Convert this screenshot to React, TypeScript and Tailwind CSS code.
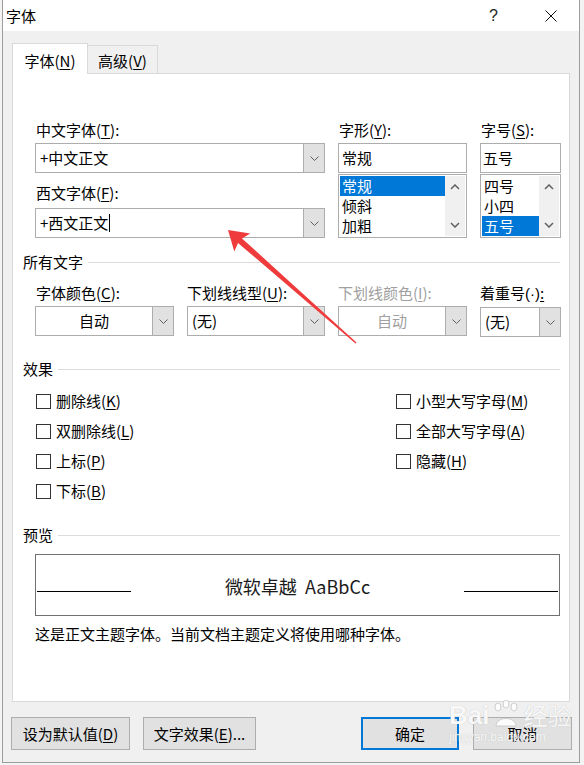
import type { ReactNode } from "react";

const STYLE_ITEMS = ["常规", "倾斜", "加粗"];
const SIZE_ITEMS = ["四号", "小四", "五号"];

function Key({ children }: { children: ReactNode }) {
  return <span className="underline decoration-1 underline-offset-[2px]">{children}</span>;
}

function Caret() {
  return (
    <svg width="9" height="5" viewBox="0 0 9 5" className="block">
      <path d="M0.5 0.5 L4.5 4.5 L8.5 0.5" fill="none" stroke="#606060" strokeWidth="1" />
    </svg>
  );
}

function ScrollArrow({ up }: { up?: boolean }) {
  return (
    <svg width="10" height="6" viewBox="0 0 10 6" className="block">
      <path
        d={up ? "M1 5 L5 1 L9 5" : "M1 1 L5 5 L9 1"}
        fill="none"
        stroke="#606060"
        strokeWidth="1.5"
      />
    </svg>
  );
}

function Combo({
  className,
  children,
  center,
  muted,
}: {
  className: string;
  children: ReactNode;
  center?: boolean;
  muted?: boolean;
}) {
  return (
    <div className={`mt-[3px] flex h-[30px] shrink-0 border border-[#adadad] bg-white ${className}`}>
      <div
        className={`flex flex-1 items-center px-[4px] ${center ? "justify-center" : ""} ${
          muted ? "text-[#a0a0a0]" : "text-black"
        }`}
      >
        {children}
      </div>
      <div className="flex w-[21px] items-center justify-center border-l border-[#adadad] bg-[#e1e1e1]">
        <Caret />
      </div>
    </div>
  );
}

function ListBox({ items, selected }: { items: string[]; selected: string }) {
  return (
    <div className="mt-[1px] flex h-[64px] border border-[#adadad] bg-white p-[1px]">
      <div className="flex-1">
        {items.map((item) => (
          <div
            key={item}
            className={`h-[20px] pl-[2px] leading-[20px] ${
              item === selected ? "bg-[#0078d7] text-white" : ""
            }`}
          >
            {item}
          </div>
        ))}
      </div>
      <div className="flex w-[20px] flex-col items-center justify-between bg-[#f0f0f0] py-[8px]">
        <ScrollArrow up />
        <ScrollArrow />
      </div>
    </div>
  );
}

function Section({ title }: { title: string }) {
  return (
    <div className="flex h-[20px] items-center">
      <span className="leading-[20px]">{title}</span>
      <div className="ml-[5px] h-px flex-1 bg-[#dcdcdc]" />
    </div>
  );
}

function Check({ children }: { children: ReactNode }) {
  return (
    <div className="flex h-[30px] items-center">
      <div className="ml-[1px] h-[15px] w-[15px] border border-[#333333] bg-white" />
      <span className="ml-[5px]">{children}</span>
    </div>
  );
}

function Button({
  className,
  children,
  primary,
}: {
  className: string;
  children: ReactNode;
  primary?: boolean;
}) {
  return (
    <div
      className={`flex h-[33px] items-center justify-center bg-[#e1e1e1] ${
        primary ? "border-2 border-[#0078d7]" : "border border-[#adadad]"
      } ${className}`}
    >
      {children}
    </div>
  );
}

export default function App() {
  return (
    <div className="relative h-[765px] w-[584px] overflow-hidden bg-[#f3f3f3] font-['Noto_Sans_CJK_SC','Noto_Sans',sans-serif] text-[15px] leading-[20px] text-black">
      <div className="ml-[2px] flex h-[763px] w-[578px] flex-col border-x border-b border-[#9d9d9d] bg-[#f0f0f0]">
        {/* title bar */}
        <div className="flex h-[31px] items-center bg-white">
          <span className="ml-[3px]">字体</span>
          <div className="ml-auto flex h-full w-[57px] items-center justify-center font-['Liberation_Sans',sans-serif] text-[16px] font-light text-[#222]">
            ?
          </div>
          <div className="flex h-full w-[57px] items-center justify-center">
            <svg width="12" height="12" viewBox="0 0 12 12">
              <path d="M0.5 0.5 L11.5 11.5 M11.5 0.5 L0.5 11.5" stroke="#111" strokeWidth="1" />
            </svg>
          </div>
        </div>

        {/* tabs */}
        <div className="ml-[9px] mt-[12px] flex h-[30px] items-start">
          <div className="relative z-10 flex h-[31px] w-[76px] justify-center border-x border-t border-[#d9d9d9] bg-white pt-[7px]">
            字体(<Key>N</Key>)
          </div>
          <div className="mt-[2px] flex h-[28px] w-[70px] justify-center border-r border-t border-[#d9d9d9] pt-[5px]">
            高级(<Key>V</Key>)
          </div>
        </div>

        {/* panel */}
        <div className="ml-[9px] flex h-[629px] w-[558px] flex-col border border-[#d9d9d9] bg-white pl-[10px] pr-[9px]">
          <div className="ml-[12px] mt-[46px] flex">
            <div className="w-[290px] shrink-0">
              <div className="pl-[1px]">
                中文字体(<Key>T</Key>):
              </div>
              <Combo className="w-[290px]">+中文正文</Combo>
              <div className="mt-[10px] pl-[1px]">
                西文字体(<Key>F</Key>):
              </div>
              <Combo className="mt-[5px] w-[290px]">
                +西文正文
                <span className="ml-[1px] inline-block h-[18px] w-px bg-black" />
              </Combo>
            </div>
            <div className="ml-[13px] w-[129px] shrink-0">
              <div className="pl-[1px]">
                字形(<Key>Y</Key>):
              </div>
              <div className="mt-[3px] flex h-[30px] items-center border border-[#adadad] px-[3px]">常规</div>
              <ListBox items={STYLE_ITEMS} selected="常规" />
            </div>
            <div className="ml-[13px] w-[81px] shrink-0">
              <div className="pl-[1px]">
                字号(<Key>S</Key>):
              </div>
              <div className="mt-[3px] flex h-[30px] items-center border border-[#adadad] px-[2px]">五号</div>
              <ListBox items={SIZE_ITEMS} selected="五号" />
            </div>
          </div>

          <div className="mt-[14px]">
            <Section title="所有文字" />
          </div>
          <div className="ml-[12px] mt-[11px] flex">
            <div className="w-[139px] shrink-0">
              <div className="pl-[1px]">
                字体颜色(<Key>C</Key>):
              </div>
              <Combo className="w-[139px]" center>
                自动
              </Combo>
            </div>
            <div className="ml-[13px] w-[138px] shrink-0">
              <div>
                下划线线型(<Key>U</Key>):
              </div>
              <Combo className="w-[138px]">(无)</Combo>
            </div>
            <div className="ml-[13px] w-[129px] shrink-0">
              <div className="text-[#a0a0a0]">
                下划线颜色(<Key>I</Key>):
              </div>
              <Combo className="w-[129px]" center muted>
                自动
              </Combo>
            </div>
            <div className="ml-[13px] w-[81px] shrink-0">
              <div>
                着重号<span className="font-['Liberation_Sans',sans-serif]">(·)</span>
                <Key>:</Key>
              </div>
              <Combo className="w-[81px]">(无)</Combo>
            </div>
          </div>

          <div className="mt-[22px]">
            <Section title="效果" />
          </div>
          <div className="ml-[12px] mt-[7px] flex">
            <div className="w-[360px] shrink-0">
              <Check>
                删除线(<Key>K</Key>)
              </Check>
              <Check>
                双删除线(<Key>L</Key>)
              </Check>
              <Check>
                上标(<Key>P</Key>)
              </Check>
              <Check>
                下标(<Key>B</Key>)
              </Check>
            </div>
            <div>
              <Check>
                小型大写字母(<Key>M</Key>)
              </Check>
              <Check>
                全部大写字母(<Key>A</Key>)
              </Check>
              <Check>
                隐藏(<Key>H</Key>)
              </Check>
            </div>
          </div>

          <div className="mt-[19px]">
            <Section title="预览" />
          </div>
          <div className="ml-[12px] mt-[9px] flex h-[62px] border border-[#707070]">
            <div className="ml-[1px] mt-[36px] h-px w-[94px] bg-black" />
            <div className="mt-[20px] flex-1 whitespace-pre text-center text-[18px] leading-[22px] text-[#1a1a1a]">
              微软卓越  AaBbCc
            </div>
            <div className="mr-[1px] mt-[36px] h-px w-[94px] bg-black" />
          </div>
          <div className="ml-[12px] mt-[8px]">这是正文主题字体。当前文档主题定义将使用哪种字体。</div>
        </div>

        {/* buttons */}
        <div className="ml-[8px] mt-[15px] flex">
          <Button className="w-[119px]">
            设为默认值(<Key>D</Key>)
          </Button>
          <Button className="ml-[13px] w-[113px]">
            文字效果(<Key>E</Key>)...
          </Button>
          <Button className="ml-[105px] w-[98px]" primary>
            确定
          </Button>
          <Button className="ml-[14px] w-[99px]">取消</Button>
        </div>
      </div>

      {/* watermark */}
      <div className="pointer-events-none absolute left-[449px] top-[700px] flex flex-col items-start text-white/90 [text-shadow:0_0_1px_#b4b4b4]">
        <div className="flex items-end">
          <span className="font-['Liberation_Sans',sans-serif] text-[26px] font-bold leading-[30px]">Bai</span>
          <svg width="32" height="30" viewBox="0 0 32 30" className="mx-[1px]">
            <g fill="white" fillOpacity="0.85" stroke="#c4c4c4" strokeWidth="0.8">
              <ellipse cx="8" cy="7" rx="3" ry="4" />
              <ellipse cx="16" cy="4" rx="3" ry="4" />
              <ellipse cx="24" cy="7" rx="3" ry="4" />
              <path d="M6 26 C6 16 26 16 26 26 Z" />
            </g>
          </svg>
          <span className="text-[24px] leading-[30px]">经验</span>
        </div>
        <span className="font-['Liberation_Sans',sans-serif] text-[12px] leading-[14px]">jingyan.baidu.com</span>
      </div>

      {/* red arrow */}
      <svg
        className="pointer-events-none absolute left-0 top-0"
        width="584"
        height="765"
        viewBox="0 0 584 765"
      >
        <polygon
          points="228,230 250.2,233.6 242,238.4 356.5,342.4 355.5,343.6 238,242.9 234.3,251.6"
          fill="#ef3b3b"
        />
      </svg>
    </div>
  );
}
